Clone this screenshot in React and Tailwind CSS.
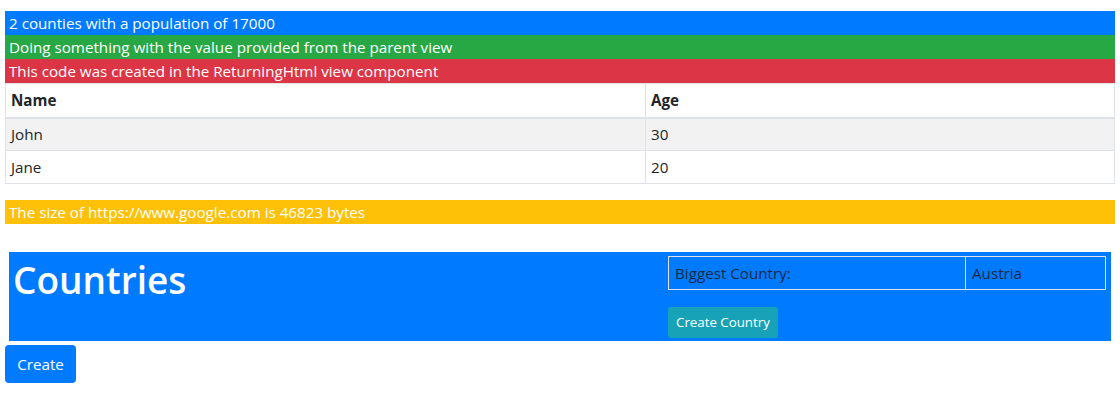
const people = [
  { name: 'John', age: 30 },
  { name: 'Jane', age: 20 },
];

function Bar({ className, children }) {
  return <div className={`h-[24px] pl-[4px] leading-[24px] text-white ${className}`}>{children}</div>;
}

export default function App() {
  return (
    <div className="min-h-screen bg-white px-[5px] pt-[11px] text-[15.2px] text-[#212529] font-['Open_Sans',sans-serif]">
      <Bar className="bg-[#007bff]">2 counties with a population of 17000</Bar>
      <Bar className="bg-[#28a745]">Doing something with the value provided from the parent view</Bar>
      <Bar className="bg-[#dc3545]">This code was created in the ReturningHtml view component</Bar>

      <table className="mb-[16px] w-full border-collapse border border-[#dee2e6]">
        <thead>
          <tr className="h-[34px] border-b-2 border-[#dee2e6]">
            <th className="w-[640px] border-r border-[#dee2e6] px-[5px] text-left font-bold">Name</th>
            <th className="px-[5px] text-left font-bold">Age</th>
          </tr>
        </thead>
        <tbody>
          {people.map((p, i) => (
            <tr key={p.name} className={`h-[33px] border-b border-[#dee2e6] ${i % 2 === 0 ? 'bg-[#f2f2f2]' : 'bg-white'}`}>
              <td className="border-r border-[#dee2e6] px-[5px]">{p.name}</td>
              <td className="px-[5px]">{p.age}</td>
            </tr>
          ))}
        </tbody>
      </table>

      <Bar className="bg-[#ffc107]">The size of https://www.google.com is 46823 bytes</Bar>

      <div className="mx-[4px] mt-[28px] flex h-[89px] bg-[#007bff]">
        <div className="w-[659px] pl-[4px] pt-[4px]">
          <h1 className="text-[37px] leading-[48px] font-semibold text-white">Countries</h1>
        </div>
        <div className="flex flex-1 flex-col items-start pr-[5px] pt-[4px]">
          <table className="w-full border-collapse border border-[#dee2e6]">
            <tbody>
              <tr className="h-[33px]">
                <td className="w-[297px] border-r border-[#dee2e6] px-[6px] text-[#1b2a44]">Biggest Country:</td>
                <td className="px-[6px] text-[#1b2a44]">Austria</td>
              </tr>
            </tbody>
          </table>
          <button className="mt-[17px] h-[31px] rounded-[3px] bg-[#17a2b8] px-[8px] text-[13.3px] text-white">
            Create Country
          </button>
        </div>
      </div>

      <button className="mt-[4px] h-[38px] w-[71px] rounded-[4px] bg-[#007bff] text-[15.2px] text-white">
        Create
      </button>
    </div>
  );
}
